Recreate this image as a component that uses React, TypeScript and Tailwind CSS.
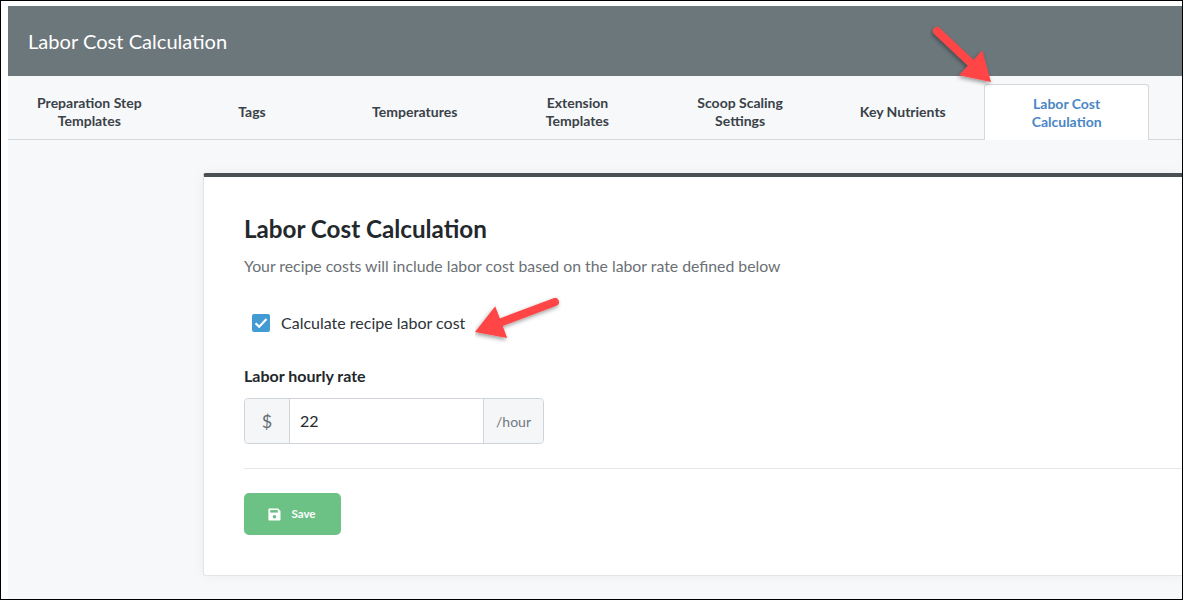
const tabs = [
  ["Preparation Step", "Templates"],
  ["Tags"],
  ["Temperatures"],
  ["Extension", "Templates"],
  ["Scoop Scaling", "Settings"],
  ["Key Nutrients"],
];

function FloppyIcon() {
  return (
    <svg width="13" height="13" viewBox="0 0 13 13" className="mr-[11px]">
      <path d="M1.2 0.5H10L12.5 3V11.7a0.8 0.8 0 0 1-.8.8H1.2a0.8 0.8 0 0 1-.8-.8V1.3a0.8 0.8 0 0 1 .8-.8Z" fill="#fff" />
      <rect x="2.2" y="2" width="7.6" height="2.6" fill="#6cc285" />
      <circle cx="6.5" cy="8.7" r="1.8" fill="#6cc285" />
    </svg>
  );
}

function Arrow({ x1, y1, x2, y2, className }: { x1: number; y1: number; x2: number; y2: number; className: string }) {
  // shaft plus head, tip at x2,y2
  const dx = x2 - x1;
  const dy = y2 - y1;
  const len = Math.sqrt(dx * dx + dy * dy);
  const ux = dx / len;
  const uy = dy / len;
  const bx = x2 - ux * 28;
  const by = y2 - uy * 28;
  const nx = -uy;
  const ny = ux;
  const head = `${x2},${y2} ${bx + nx * 17},${by + ny * 17} ${bx - nx * 17},${by - ny * 17}`;
  return (
    <svg width="100" height="80" className={className}>
      <defs>
        <filter id={`s${x1}`} x="-20%" y="-20%" width="150%" height="150%">
          <feDropShadow dx="-1" dy="2" stdDeviation="2" floodColor="#000" floodOpacity="0.4" />
        </filter>
      </defs>
      <g filter={`url(#s${x1})`}>
        <line x1={x1} y1={y1} x2={bx} y2={by} stroke="#ff4444" strokeWidth="8" strokeLinecap="round" />
        <polygon points={head} fill="#ff4444" />
      </g>
    </svg>
  );
}

export default function App() {
  return (
    <div className="relative h-[600px] w-[1183px] overflow-hidden border border-black bg-white pl-[7px] pt-[5px] font-['Lato',sans-serif]">
      <div className="flex h-[70px] items-center bg-[#6c777c] pl-5 text-[20.1px] text-white">
        Labor Cost Calculation
      </div>

      <div className="h-[524px] bg-[#f7f8fa]">
        <div className="flex h-16 items-stretch border-b border-[#d5d9dd]">
          {tabs.map((lines) => (
            <div
              key={lines[0]}
              className="flex w-[162.7px] flex-col items-center justify-center pt-2 text-[14px] font-bold leading-[18px] text-[#3a4248]"
            >
              {lines.map((l) => (
                <span key={l}>{l}</span>
              ))}
            </div>
          ))}
          <div className="mb-[-1px] mt-2 flex w-[165px] flex-col items-center justify-center rounded-t-[3px] border border-b-0 border-[#d5d9dd] bg-white text-[14px] font-bold leading-[18px] text-[#4a86c5]">
            <span>Labor Cost</span>
            <span>Calculation</span>
          </div>
        </div>

        <div className="ml-[195px] mt-[33px] h-[403px] rounded-l-[3px] border-l border-b border-[#e2e4e7] border-t-4 border-t-[#495054] bg-white pl-10 pt-[37px] shadow-[0_0_12px_rgba(0,0,0,0.05)]">
          <h1 className="text-[24.2px] font-bold leading-[29px] text-[#23282c]">Labor Cost Calculation</h1>
          <p className="mt-[14px] text-[15.8px] leading-[18px] text-[#6b7075]">
            Your recipe costs will include labor cost based on the labor rate defined below
          </p>

          <div className="ml-2 mt-[39px] flex h-[18px] items-center">
            <div className="flex h-[18px] w-[18px] items-center justify-center rounded-[2px] bg-[#429bd3]">
              <svg width="18" height="18" viewBox="0 0 18 18" fill="none">
                <path d="M3.5 9.2L7.2 12.8L14.5 5" stroke="#fff" strokeWidth="2.2" />
              </svg>
            </div>
            <span className="ml-[11px] text-[16px] text-[#2d3338]">Calculate recipe labor cost</span>
          </div>

          <div className="mt-[35px] text-[16px] font-bold leading-[18px] text-[#23282c]">Labor hourly rate</div>

          <div className="mt-[13px] flex h-[46px] w-[300px] rounded-[4px] border border-[#ced4da]">
            <div className="flex w-[45px] items-center justify-center rounded-l-[4px] border-r border-[#ced4da] bg-[#f5f6f8] text-[18px] text-[#666d75]">
              $
            </div>
            <div className="flex flex-1 items-center pl-[10px] text-[16px] text-[#23282c]">22</div>
            <div className="flex w-[60px] items-center justify-center rounded-r-[4px] border-l border-[#ced4da] bg-[#f5f6f8] text-[14px] text-[#71787f]">
              /hour
            </div>
          </div>

          <div className="mt-6 border-t border-[#e6e8ea]" />

          <button className="mt-6 flex h-[42px] w-[97px] items-center justify-center rounded-[5px] bg-[#6cc285] pr-[2px] text-[11.5px] font-bold text-white">
            <FloppyIcon />
            Save
          </button>
        </div>
      </div>

      <Arrow x1={7} y1={6} x2={61} y2={57} className="absolute left-[929px] top-[24px]" />
      <Arrow x1={80} y1={6} x2={0} y2={36} className="absolute left-[474px] top-[295px]" />
    </div>
  );
}
